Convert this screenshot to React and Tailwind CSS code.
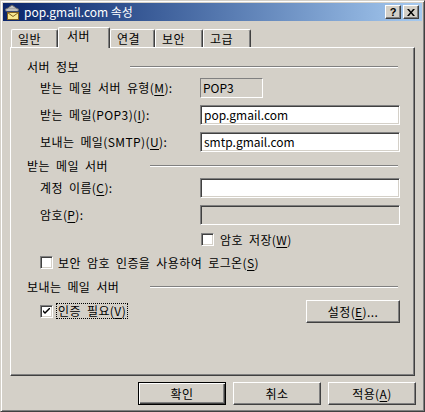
import React from "react";

const F = "font-['Noto_Sans_CJK_KR',sans-serif]";
const raised =
  "border border-t-white border-l-white border-r-[#404040] border-b-[#404040] shadow-[inset_-1px_-1px_#808080]";
const sunken =
  "border border-t-[#808080] border-l-[#808080] border-r-white border-b-white shadow-[inset_1px_1px_#404040,inset_-1px_-1px_#d4d0c8]";

function U({ children }) {
  return <span className="underline underline-offset-2">{children}</span>;
}

function Header({ w, children }) {
  return (
    <div className="flex items-center h-[14px]">
      <span className={w}>{children}</span>
      <div className="flex-1 h-[2px] border-t border-t-[#808080] border-b border-b-white mr-[2px]" />
    </div>
  );
}

function Check({ checked }) {
  return (
    <div className={`w-[13px] h-[13px] bg-white flex items-center justify-center shrink-0 ${sunken}`}>
      {checked && (
        <svg width="7" height="7" viewBox="0 0 7 7">
          <path d="M0 2 L0 4 L2 6 L7 1 L7 -1 L2 4 Z" fill="black" />
        </svg>
      )}
    </div>
  );
}

function Tab({ w, selected, children }) {
  if (selected) {
    return (
      <div
        className={`${w} h-[21px] -mb-px relative z-10 bg-[#d4d0c8] border-t border-l border-t-white border-l-white border-r border-r-[#404040] shadow-[inset_-1px_0_#808080] rounded-tl-[2px] rounded-tr-[2px] pl-[8px] pt-[1px] flex items-start`}
      >
        <span className="leading-[14px]">{children}</span>
      </div>
    );
  }
  return (
    <div
      className={`${w} h-[18px] border-t border-l border-t-white border-l-white border-r border-r-[#404040] shadow-[inset_-1px_0_#808080] rounded-tl-[2px] rounded-tr-[2px] pl-[6px] flex items-center`}
    >
      <span className="leading-[14px]">{children}</span>
    </div>
  );
}

function Button({ w, def, children }) {
  const cls = def
    ? "border border-black shadow-[inset_1px_1px_white,inset_-1px_-1px_#404040,inset_-2px_-2px_#808080]"
    : raised;
  return (
    <div className={`${w} h-[23px] flex items-center justify-center bg-[#d4d0c8] ${cls}`}>
      <span className="leading-[14px]">{children}</span>
    </div>
  );
}

function MailIcon() {
  return (
    <svg width="16" height="16" viewBox="0 0 16 16">
      <path d="M1 6 L8 1 L15 6 Z" fill="#c0c0c0" stroke="#606060" strokeWidth="1" />
      <rect x="2" y="5" width="12" height="2" fill="#e8e8e8" stroke="#808080" strokeWidth="0.8" />
      <rect x="3.5" y="8.5" width="11" height="7" fill="#f8e890" stroke="#806020" strokeWidth="1" />
      <path d="M3.5 8.5 L9 12.5 L14.5 8.5" fill="none" stroke="#806020" strokeWidth="1" />
    </svg>
  );
}

export default function App() {
  return (
    <div
      className={`${F} text-[12px] text-black w-[425px] h-[412px] bg-[#d4d0c8] border border-t-[#d4d0c8] border-l-[#d4d0c8] border-r-[#404040] border-b-[#404040] shadow-[inset_1px_1px_white,inset_-1px_-1px_#808080] p-[2px] flex flex-col`}
    >
      {/* title bar */}
      <div className="h-[18px] bg-linear-to-r from-[#0a246a] to-[#a6caf0] flex items-center pl-[1px] pr-[3px] shrink-0">
        <MailIcon />
        <span className="ml-[4px] text-white text-[12px] leading-[14px]">pop.gmail.com 속성</span>
        <div className="flex-1" />
        <div className={`w-[16px] h-[14px] bg-[#d4d0c8] flex items-center justify-center ${raised}`}>
          <span className="font-['Liberation_Sans',sans-serif] font-bold text-[11px] leading-none">?</span>
        </div>
        <div className={`ml-[2px] w-[16px] h-[14px] bg-[#d4d0c8] flex items-center justify-center ${raised}`}>
          <svg width="8" height="7" viewBox="0 0 8 7">
            <path d="M0 0 H2 L4 2.5 L6 0 H8 L5 3.5 L8 7 H6 L4 4.5 L2 7 H0 L3 3.5 Z" fill="black" />
          </svg>
        </div>
      </div>

      <div className="mx-[7px] flex flex-col">
        {/* tabs */}
        <div className="mt-[6px] h-[20px] flex items-end pl-[1px] tracking-[0.5px]">
          <Tab w="w-[47px]">일반</Tab>
          <Tab w="w-[52px]" selected>
            서버
          </Tab>
          <Tab w="w-[45px]">연결</Tab>
          <Tab w="w-[48px]">보안</Tab>
          <Tab w="w-[48px]">고급</Tab>
        </div>

        {/* panel */}
        <div className="h-[329px] border border-t-white border-l-white border-r-[#404040] border-b-[#404040] shadow-[inset_-1px_-1px_#808080] pl-[16px] pr-[14px] flex flex-col tracking-[0.4px] [word-spacing:3px]">
          <div className="mt-[12px]">
            <Header w="w-[103px]">서버 정보</Header>
          </div>

          <div className="mt-[4px] h-[20px] flex items-center pl-[13px]">
            <span className="w-[160px]">
              받는 메일 서버 유형(<U>M</U>):
            </span>
            <div className="w-[63px] h-[20px] border border-t-[#808080] border-l-[#808080] border-r-white border-b-white flex items-center pl-[2px] tracking-normal">
              POP3
            </div>
          </div>

          <div className="mt-[7px] h-[20px] flex items-center pl-[13px]">
            <span className="w-[160px]">
              받는 메일(POP3)(<U>I</U>):
            </span>
            <div className={`flex-1 h-[20px] bg-white flex items-center pl-[3px] tracking-normal ${sunken}`}>
              pop.gmail.com
            </div>
          </div>

          <div className="mt-[7px] h-[20px] flex items-center pl-[13px]">
            <span className="w-[160px]">
              보내는 메일(SMTP)(<U>U</U>):
            </span>
            <div className={`flex-1 h-[20px] bg-white flex items-center pl-[3px] tracking-normal ${sunken}`}>
              smtp.gmail.com
            </div>
          </div>

          <div className="mt-[7px]">
            <Header w="w-[123px]">받는 메일 서버</Header>
          </div>

          <div className="mt-[5px] h-[20px] flex items-center pl-[13px]">
            <span className="w-[160px]">
              계정 이름(<U>C</U>):
            </span>
            <div className={`flex-1 h-[20px] bg-white ${sunken}`} />
          </div>

          <div className="mt-[7px] h-[20px] flex items-center pl-[13px]">
            <span className="w-[160px]">
              암호(<U>P</U>):
            </span>
            <div className={`flex-1 h-[20px] bg-[#d4d0c8] ${sunken}`} />
          </div>

          <div className="mt-[8px] h-[13px] flex items-center pl-[174px]">
            <Check />
            <span className="ml-[6px] leading-[14px]">
              암호 저장(<U>W</U>)
            </span>
          </div>

          <div className="mt-[10px] h-[13px] flex items-center pl-[13px]">
            <Check />
            <span className="ml-[5px] leading-[14px]">
              보안 암호 인증을 사용하여 로그온(<U>S</U>)
            </span>
          </div>

          <div className="mt-[11px]">
            <Header w="w-[123px]">보내는 메일 서버</Header>
          </div>

          <div className="mt-[6px] h-[23px] flex items-start pl-[13px]">
            <div className="mt-[4px] flex items-center">
              <Check checked />
              <span className="ml-[4px] leading-[14px] px-[1px] outline outline-1 outline-dotted outline-black">
                인증 필요(<U>V</U>)
              </span>
            </div>
            <div className="flex-1" />
            <Button w="w-[94px]">
              설정(<U>E</U>)...
            </Button>
          </div>
        </div>

        {/* bottom buttons */}
        <div className="mt-[6px] flex justify-end gap-[7px] -mr-[1px] tracking-[0.4px]">
          <Button w="w-[88px]" def>
            확인
          </Button>
          <Button w="w-[88px]">취소</Button>
          <Button w="w-[88px]">
            적용(<U>A</U>)
          </Button>
        </div>
      </div>
    </div>
  );
}
